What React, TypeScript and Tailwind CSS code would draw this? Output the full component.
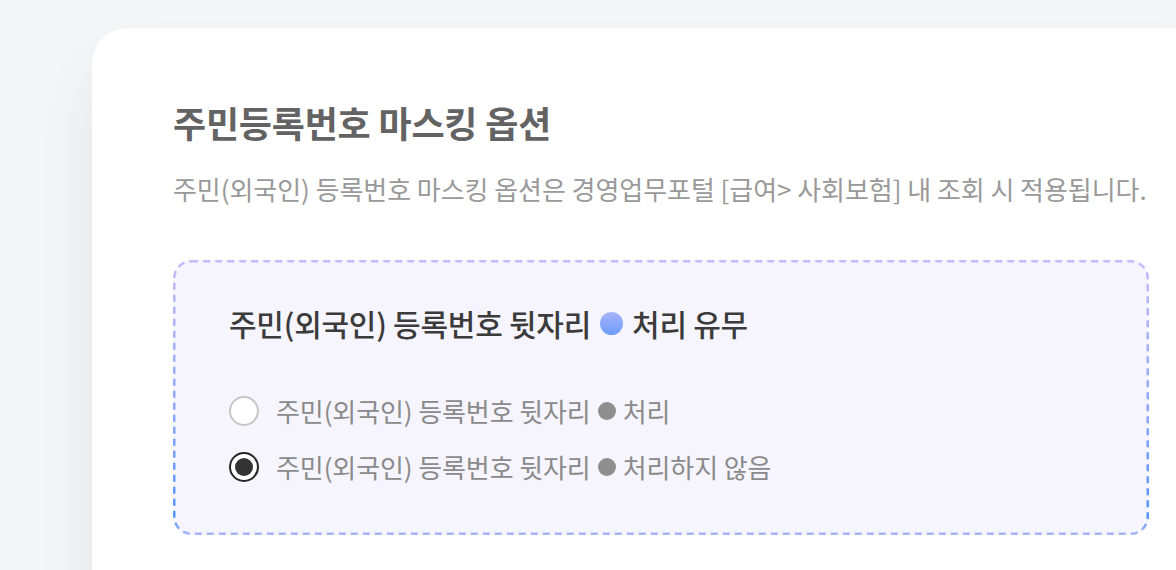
import { useState } from 'react';

const FONT = "font-['Noto_Sans_CJK_KR','Noto_Sans',sans-serif]";

// ── Dashed gradient frame ──────────────────────────────────────────────────
function DashedFrame({ w, h }: { w: number; h: number }) {
  return (
    <svg
      className="absolute inset-0 pointer-events-none"
      width={w}
      height={h}
      viewBox={`0 0 ${w} ${h}`}
    >
      <defs>
        <linearGradient id="frame" x1="0" y1="0" x2="0" y2={h} gradientUnits="userSpaceOnUse">
          <stop offset="0" stopColor="#c2bbfa" />
          <stop offset="0.5" stopColor="#93a9fb" />
          <stop offset="0.93" stopColor="#5696fa" />
          <stop offset="1" stopColor="#adb7fb" />
        </linearGradient>
      </defs>
      <rect
        x="1.25"
        y="1.25"
        width={w - 2.5}
        height={h - 2.5}
        rx="17"
        fill="none"
        stroke="url(#frame)"
        strokeWidth="2.5"
        strokeDasharray="7 5"
      />
    </svg>
  );
}

function Radio({ checked }: { checked: boolean }) {
  return checked ? (
    <span className="w-[30px] h-[30px] rounded-full border-[2.5px] border-[#262626] bg-white flex items-center justify-center shrink-0">
      <span className="w-[18px] h-[18px] rounded-full bg-[#333333]" />
    </span>
  ) : (
    <span className="w-[30px] h-[30px] rounded-full border-[2.5px] border-[#c6c6c6] bg-white shrink-0" />
  );
}

const options = [
  { id: 'mask', label: '처리' },
  { id: 'nomask', label: '처리하지 않음' },
];

export default function App() {
  const [value, setValue] = useState('nomask');

  return (
    <div className={`min-h-[570px] h-[570px] overflow-hidden bg-[#f4f5f7] pl-[92px] pt-[28px] ${FONT}`}>
      <div className="w-[1138px] h-[620px] bg-white rounded-[36px] shadow-[0_40px_60px_rgba(0,0,0,0.07)] px-[81px] pt-[72px]">
        <h1 className="text-[36px] leading-[44px] font-bold text-[#636363] tracking-[-0.2px]">
          주민등록번호 마스킹 옵션
        </h1>
        <p className="mt-[28px] text-[26px] leading-[34px] text-[#999999] tracking-[-0.05px] whitespace-nowrap">
          주민(외국인) 등록번호 마스킹 옵션은 경영업무포털 [급여&gt; 사회보험] 내 조회 시 적용됩니다.
        </p>

        <div className="relative mt-[54px] w-[976px] h-[275px] rounded-[18px] bg-[#f6f5fe] pl-[56px] pt-[43px]">
          <DashedFrame w={976} h={275} />
          <h2 className="flex items-center gap-[9px] text-[30px] leading-[40px] font-medium text-[#3b3b3b] tracking-[-0.25px]">
            <span>주민(외국인) 등록번호 뒷자리</span>
            <span className="w-[23px] h-[23px] rounded-full bg-gradient-to-b from-[#a9b3fb] to-[#6a9cfa]" />
            <span>처리 유무</span>
          </h2>

          <div className="mt-[51px] flex flex-col gap-[22px]">
            {options.map((o) => (
              <label
                key={o.id}
                className="flex items-center gap-[17px] h-[34px] cursor-pointer"
                onClick={() => setValue(o.id)}
              >
                <Radio checked={value === o.id} />
                <span className="flex items-center gap-[7px] text-[26px] leading-[34px] text-[#8a8a8a] tracking-[-0.1px]">
                  <span>주민(외국인) 등록번호 뒷자리</span>
                  <span className="w-[18px] h-[18px] rounded-full bg-[#8e8e8e]" />
                  <span>{o.label}</span>
                </span>
              </label>
            ))}
          </div>
        </div>
      </div>
    </div>
  );
}
